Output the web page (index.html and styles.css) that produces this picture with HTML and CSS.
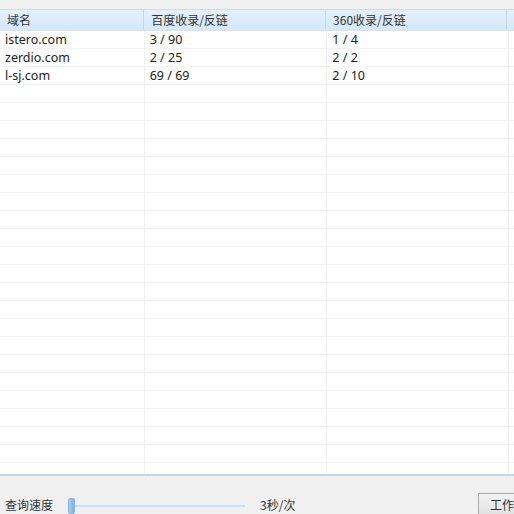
FILE: index.html
```html
<!DOCTYPE html>
<html lang="zh">
<head>
<meta charset="utf-8">
<link rel="stylesheet" href="styles.css">
</head>
<body>
<div class="app">
  <div class="topbar"></div>
  <div class="table">
    <div class="row head">
      <div class="c c1">域名</div>
      <div class="c c2">百度收录/反链</div>
      <div class="c c3">360收录/反链</div>
      <div class="c c4"></div>
    </div>
    <div class="row"><div class="c c1">istero.com</div><div class="c c2">3 / 90</div><div class="c c3">1 / 4</div><div class="c c4"></div></div>
    <div class="row"><div class="c c1">zerdio.com</div><div class="c c2">2 / 25</div><div class="c c3">2 / 2</div><div class="c c4"></div></div>
    <div class="row"><div class="c c1">l-sj.com</div><div class="c c2">69 / 69</div><div class="c c3">2 / 10</div><div class="c c4"></div></div>
    <div class="row"><div class="c c1"></div><div class="c c2"></div><div class="c c3"></div><div class="c c4"></div></div>
    <div class="row"><div class="c c1"></div><div class="c c2"></div><div class="c c3"></div><div class="c c4"></div></div>
    <div class="row"><div class="c c1"></div><div class="c c2"></div><div class="c c3"></div><div class="c c4"></div></div>
    <div class="row"><div class="c c1"></div><div class="c c2"></div><div class="c c3"></div><div class="c c4"></div></div>
    <div class="row"><div class="c c1"></div><div class="c c2"></div><div class="c c3"></div><div class="c c4"></div></div>
    <div class="row"><div class="c c1"></div><div class="c c2"></div><div class="c c3"></div><div class="c c4"></div></div>
    <div class="row"><div class="c c1"></div><div class="c c2"></div><div class="c c3"></div><div class="c c4"></div></div>
    <div class="row"><div class="c c1"></div><div class="c c2"></div><div class="c c3"></div><div class="c c4"></div></div>
    <div class="row"><div class="c c1"></div><div class="c c2"></div><div class="c c3"></div><div class="c c4"></div></div>
    <div class="row"><div class="c c1"></div><div class="c c2"></div><div class="c c3"></div><div class="c c4"></div></div>
    <div class="row"><div class="c c1"></div><div class="c c2"></div><div class="c c3"></div><div class="c c4"></div></div>
    <div class="row"><div class="c c1"></div><div class="c c2"></div><div class="c c3"></div><div class="c c4"></div></div>
    <div class="row"><div class="c c1"></div><div class="c c2"></div><div class="c c3"></div><div class="c c4"></div></div>
    <div class="row"><div class="c c1"></div><div class="c c2"></div><div class="c c3"></div><div class="c c4"></div></div>
    <div class="row"><div class="c c1"></div><div class="c c2"></div><div class="c c3"></div><div class="c c4"></div></div>
    <div class="row"><div class="c c1"></div><div class="c c2"></div><div class="c c3"></div><div class="c c4"></div></div>
    <div class="row"><div class="c c1"></div><div class="c c2"></div><div class="c c3"></div><div class="c c4"></div></div>
    <div class="row"><div class="c c1"></div><div class="c c2"></div><div class="c c3"></div><div class="c c4"></div></div>
    <div class="row"><div class="c c1"></div><div class="c c2"></div><div class="c c3"></div><div class="c c4"></div></div>
    <div class="row"><div class="c c1"></div><div class="c c2"></div><div class="c c3"></div><div class="c c4"></div></div>
    <div class="row"><div class="c c1"></div><div class="c c2"></div><div class="c c3"></div><div class="c c4"></div></div>
    <div class="row last"><div class="c c1"></div><div class="c c2"></div><div class="c c3"></div><div class="c c4"></div></div>
  </div>
  <div class="bottom">
    <span class="label">查询速度</span>
    <div class="slider"><div class="thumb"></div><div class="track"></div></div>
    <span class="speed">3秒/次</span>
    <div class="spacer"></div>
    <div class="btn">工作</div>
  </div>
</div>
</body>
</html>
```
FILE: styles.css
```css
html, body {
  margin: 0;
  padding: 0;
  width: 514px;
  height: 514px;
  overflow: hidden;
  background: #f0f0f0;
  font-family: "Noto Sans", "Noto Sans CJK SC", sans-serif;
  color: #222;
}
.app {
  width: 514px;
  height: 514px;
  display: flex;
  flex-direction: column;
}
.topbar {
  height: 9px;
  background: #f0f0f0;
  border-bottom: 1px solid #dadada;
}
.table {
  background: #fff;
  height: 466px;
  border-bottom: 2px solid #bcd9ef;
  overflow: hidden;
  box-sizing: border-box;
}
.row {
  display: flex;
  height: 18px;
  border-bottom: 1px solid #f2f2f2;
  box-sizing: border-box;
}
.row.head {
  height: 21px;
  background: linear-gradient(#e3f0fc, #d6e8f9);
  border-bottom: 1px solid #d4e3f2;
}
.c {
  box-sizing: border-box;
  font-size: 12.5px;
  line-height: 17px;
  padding-left: 5px;
  white-space: nowrap;
  border-right: 1px solid #f0f0f0;
}
.head .c {
  font-size: 12px;
  line-height: 20px;
  padding-left: 7px;
  border-right: 1px solid #c8d6e4;
  font-family: "Noto Sans CJK SC", sans-serif;
  color: #333;
}
.c1 { width: 145px; }
.c2 { width: 183px; }
.c3 { width: 182px; }
.c4 { flex: 1; border-right: none; }
.head .c4 { border-right: none; }
.bottom {
  flex: 1;
  display: flex;
  align-items: flex-end;
  padding-left: 5px;
  font-family: "Noto Sans CJK SC", sans-serif;
  font-size: 12px;
  color: #333;
}
.label {
  line-height: 18px;
  margin-bottom: 0;
}
.slider {
  display: flex;
  align-items: center;
  margin-left: 15px;
  width: 177px;
  height: 17px;
}
.thumb {
  width: 7px;
  height: 16px;
  background: linear-gradient(90deg, #a9cdf0, #7fb2e5);
  border: 1px solid #8ab5e0;
  border-radius: 2px;
  box-sizing: border-box;
}
.track {
  flex: 1;
  height: 2px;
  background: #c6e0f5;
}
.speed {
  margin-left: 15px;
  line-height: 18px;
  margin-bottom: 0;
}
.spacer { flex: 1; }
.btn {
  width: 36px;
  height: 21px;
  box-sizing: border-box;
  border: 1px solid #adadad;
  border-right: none;
  border-bottom: none;
  background: linear-gradient(#f2f2f2, #e2e2e2);
  padding-left: 11px;
  line-height: 22px;
  overflow: hidden;
  white-space: nowrap;
}
```
